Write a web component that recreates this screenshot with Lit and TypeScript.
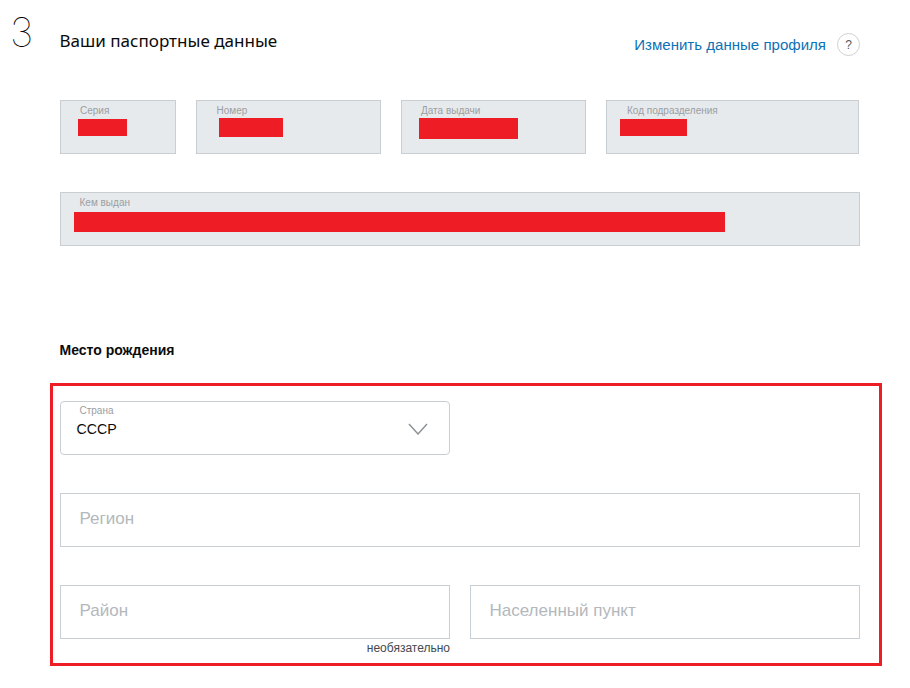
import { LitElement, html, css } from "lit";
import { customElement } from "lit/decorators.js";

@customElement("app-root")
export class AppRoot extends LitElement {
  static styles = css`
    :host {
      display: block;
      width: 910px;
      height: 688px;
      overflow: hidden;
      background: #fff;
      font-family: "Liberation Sans", Arial, sans-serif;
      color: #0b0b0b;
      box-sizing: border-box;
    }
    .page { padding: 0 50px 0 60px; display: flex; flex-direction: column; width: 910px; box-sizing: border-box; position: relative; }
    .head { display: flex; height: 100px; align-items: flex-start; }
    .step { position: absolute; left: 10px; top: 8px; font: 100 40px/50px Inter, sans-serif; color: #000; }
    .title { margin-top: 31px; margin-left: -0.5px; font: 400 17.05px/20px "Noto Sans", sans-serif; flex: 1; color: #0b0b0b; }
    .link { margin-top: 35px; font-size: 15.05px; line-height: 20px; color: #0d72b5; }
    .help {
      margin: 33px 0 0 11px; width: 23px; height: 23px; box-sizing: border-box;
      border: 1px solid #cdd1d4; border-radius: 50%; display: flex; align-items: center; justify-content: center;
      font-size: 12px; color: #55595c;
    }
    .row { display: flex; gap: 20px; }
    .row.second { margin-top: 38px; }
    .field {
      position: relative; height: 54px; box-sizing: border-box; border: 1px solid #c9ced2;
      background: #e7eaed; flex: none;
    }
    .field label { position: absolute; top: 3.5px; font-size: 10px; line-height: 12px; color: #9a9ea2; white-space: nowrap; }
    .redact { position: absolute; background: #ee1c25; }
    .w116 { width: 116px; } .w185 { width: 185px; } .w253 { width: 253px; } .w800 { width: 800px; }
    .birth { margin: 95px 0 0 -0.5px; font-size: 14px; line-height: 18px; font-weight: bold; color: #0b0b0b; height: 18px; }
    .frame {
      margin: 24px 0 0 -10px; box-sizing: border-box; width: 832px; height: 283px;
      border: 3px solid #ee1c25; padding: 15px 19px 0 7px;
      display: flex; flex-direction: column; gap: 38px;
    }
    .input {
      position: relative; height: 54px; box-sizing: border-box; border: 1px solid #c9ced2; background: #fff;
      display: flex; align-items: center; padding: 0 0 2px 18.5px;
      font-size: 17px; color: #b3b8bc;
    }
    .select { width: 390px; border-radius: 4px; padding: 0 21px 0 15.5px; color: #0b0b0b; font-size: 14.2px; justify-content: space-between; }
    .select label { position: absolute; left: 18.5px; top: 3px; font-size: 10px; line-height: 12px; color: #9a9ea2; }
    .select span { margin-top: 2px; }
    .select svg { display: block; margin-top: 2px; }
    .half { width: 390px; flex: none; }
    .inputs { display: flex; gap: 20px; }
    .opt-wrap { position: relative; }
    .opt { position: absolute; right: 0; top: 55px; font-size: 12px; line-height: 16px; color: #44494d; white-space: nowrap; }
  `;

  render() {
    return html`
      <div class="page">
        <div class="step">3</div>
        <div class="head">
          <div class="title">Ваши паспортные данные</div>
          <div class="link">Изменить данные профиля</div>
          <div class="help">?</div>
        </div>
        <div class="row">
          <div class="field w116"><label style="left:19px">Серия</label><div class="redact" style="left:17px;top:18px;width:49px;height:17px"></div></div>
          <div class="field w185"><label style="left:19.5px">Номер</label><div class="redact" style="left:22px;top:17px;width:64px;height:19px"></div></div>
          <div class="field w185"><label style="left:19px">Дата выдачи</label><div class="redact" style="left:17px;top:17px;width:99px;height:21px"></div></div>
          <div class="field w253"><label style="left:20px">Код подразделения</label><div class="redact" style="left:13px;top:18px;width:67px;height:17px"></div></div>
        </div>
        <div class="row second">
          <div class="field w800"><label style="left:18.5px">Кем выдан</label><div class="redact" style="left:13px;top:19px;width:651px;height:20px"></div></div>
        </div>
        <div class="birth">Место рождения</div>
        <div class="frame">
          <div class="input select">
            <label>Страна</label>
            <span>СССР</span>
            <svg width="20" height="12" viewBox="0 0 20 12" fill="none"><path d="M1 1l9 10 9-10" stroke="#8a8f93" stroke-width="1.4"/></svg>
          </div>
          <div class="input">Регион</div>
          <div class="inputs">
            <div class="opt-wrap half">
              <div class="input">Район</div>
              <div class="opt">необязательно</div>
            </div>
            <div class="input half">Населенный пункт</div>
          </div>
        </div>
      </div>
    `;
  }
}
